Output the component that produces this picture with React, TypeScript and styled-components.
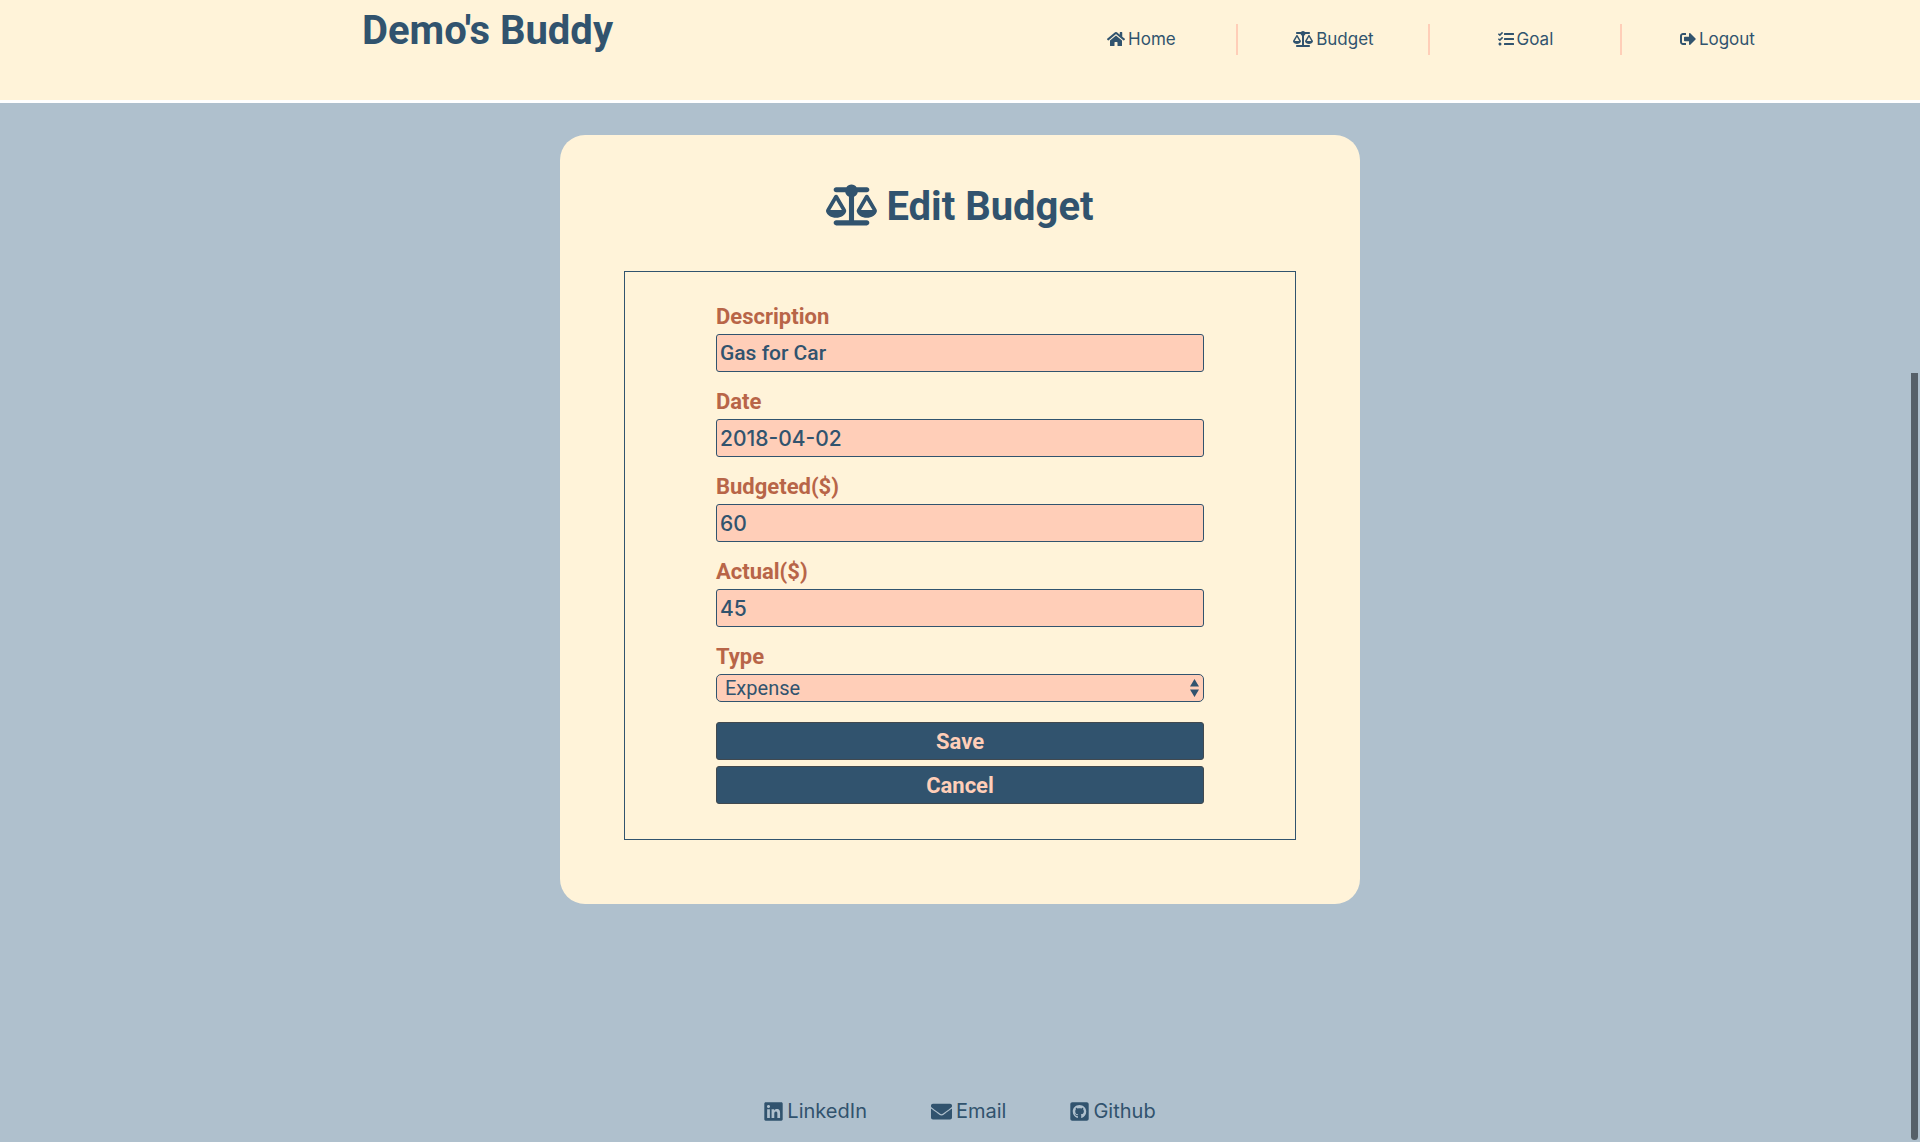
import React from 'react';
import styled, { createGlobalStyle } from 'styled-components';
import { FaHome, FaTasks, FaSignOutAlt, FaLinkedin, FaEnvelope, FaGithubSquare } from 'react-icons/fa';
import { FaScaleBalanced } from 'react-icons/fa6';

const navy = '#31536e';
const cream = '#fff3d9';
const peach = '#ffceb8';
const rust = '#b86548';
const mist = '#afc0cd';

const GlobalStyle = createGlobalStyle`
  *, *::before, *::after { box-sizing: border-box; }
  body {
    margin: 0;
    background: ${mist};
    color: ${navy};
    font-family: Inter, "Liberation Sans", sans-serif;
  }
`;

const Page = styled.div`
  display: flex;
  flex-direction: column;
  min-height: 100vh;
`;

const Header = styled.header`
  display: flex;
  justify-content: space-between;
  align-items: flex-start;
  padding: 0 5.5% 0 18.85%;
  min-height: 103px;
  background: ${cream};
  border-bottom: 3px solid #fff;
`;

const Brand = styled.h1`
  margin: 7px 0 0;
  font: bold 40px/48px Roboto, sans-serif;
`;

const NavList = styled.ul`
  display: grid;
  grid-template-columns: repeat(4, 10vw);
  margin: 24px 0 0;
  padding: 0;
  list-style: none;
`;

const NavItem = styled.li`
  display: flex;
  justify-content: center;
  align-items: flex-start;
  height: 31px;
  border-right: 2px solid ${peach};

  &:last-child {
    border-right-color: transparent;
  }
`;

const IconLink = styled.a<{ $icon: number }>`
  display: inline-flex;
  align-items: center;
  gap: 3px;
  color: ${navy};
  font-size: 17px;
  line-height: 30px;
  text-decoration: none;

  svg {
    flex: none;
    width: ${(p) => p.$icon}px;
    height: 16px;
  }
`;

const FooterLink = styled(IconLink)`
  gap: 4px;
  font-size: 20px;

  svg {
    height: 21px;
  }
`;

const Card = styled.main`
  width: 800px;
  max-width: 100%;
  margin: 32px auto 0;
  padding: 48px 64px 64px;
  background: ${cream};
  border-radius: 25px;
`;

const Title = styled.h2`
  display: flex;
  justify-content: center;
  align-items: flex-start;
  gap: 9px;
  margin: 0 0 40px;
  font: bold 40px/48px Roboto, sans-serif;

  svg {
    width: 51px;
    height: 44px;
  }
`;

const Form = styled.form`
  display: flex;
  flex-direction: column;
  padding: 30px 91px 35px;
  border: 1px solid ${navy};
`;

const Field = styled.div`
  display: flex;
  flex-direction: column;
  margin-bottom: 15px;
`;

const Label = styled.label`
  padding-bottom: 2px;
  color: ${rust};
  font: bold 22px/30px Roboto, sans-serif;
`;

const TextInput = styled.input<{ $numeric: boolean }>`
  width: 100%;
  height: 38px;
  padding: 0 3px;
  background: ${peach};
  border: 1px solid ${navy};
  border-radius: 3px;
  color: ${navy};
  font-family: ${(p) => (p.$numeric ? 'Inter' : 'Roboto')}, sans-serif;
  font-size: 21px;
  font-weight: 500;
`;

const SelectWrap = styled.div`
  display: grid;
  align-items: center;
  margin-bottom: 5px;

  > * {
    grid-area: 1 / 1;
  }

  svg {
    justify-self: end;
    margin-right: 5px;
    pointer-events: none;
  }
`;

const Select = styled.select`
  appearance: none;
  width: 100%;
  height: 28px;
  padding: 0 8px;
  background: ${peach};
  border: 1px solid ${navy};
  border-radius: 5px;
  color: ${navy};
  font: 20px Roboto, sans-serif;
`;

const Button = styled.button`
  height: 38px;
  padding: 0;
  background: ${navy};
  border: 1px solid #41494f;
  border-radius: 3px;
  color: ${peach};
  font: bold 22px Roboto, sans-serif;

  & + & {
    margin-top: 6px;
  }
`;

const Footer = styled.footer`
  display: flex;
  justify-content: center;
  gap: 64px;
  margin-top: auto;
  padding: 32px 0 16px;
`;

const ScrollThumb = styled.div`
  position: fixed;
  top: 373px;
  right: 2px;
  bottom: 2px;
  width: 7px;
  background: #566069;
  border-radius: 0 0 4px 4px;
`;

const navLinks = [
  { label: 'Home', Icon: FaHome, width: 18 },
  { label: 'Budget', Icon: FaScaleBalanced, width: 20 },
  { label: 'Goal', Icon: FaTasks, width: 16 },
  { label: 'Logout', Icon: FaSignOutAlt, width: 16 },
];

const fields = [
  { id: 'description', label: 'Description', value: 'Gas for Car', numeric: false },
  { id: 'date', label: 'Date', value: '2018-04-02', numeric: true },
  { id: 'budgeted', label: 'Budgeted($)', value: '60', numeric: true },
  { id: 'actual', label: 'Actual($)', value: '45', numeric: true },
];

const contacts = [
  { label: 'LinkedIn', Icon: FaLinkedin, width: 19 },
  { label: 'Email', Icon: FaEnvelope, width: 21 },
  { label: 'Github', Icon: FaGithubSquare, width: 19 },
];

export default function App() {
  return (
    <Page>
      <GlobalStyle />
      <Header>
        <Brand>Demo's Buddy</Brand>
        <nav>
          <NavList>
            {navLinks.map(({ label, Icon, width }) => (
              <NavItem key={label}>
                <IconLink href="#" $icon={width}>
                  <Icon />
                  {label}
                </IconLink>
              </NavItem>
            ))}
          </NavList>
        </nav>
      </Header>
      <Card>
        <Title>
          <FaScaleBalanced />
          Edit Budget
        </Title>
        <Form onSubmit={(e) => e.preventDefault()}>
          {fields.map(({ id, label, value, numeric }) => (
            <Field key={id}>
              <Label htmlFor={id}>{label}</Label>
              <TextInput id={id} type="text" defaultValue={value} $numeric={numeric} />
            </Field>
          ))}
          <Field>
            <Label htmlFor="type">Type</Label>
            <SelectWrap>
              <Select id="type" defaultValue="Expense">
                <option>Expense</option>
                <option>Income</option>
              </Select>
              <svg width="9" height="18" viewBox="0 0 9 18" fill={navy} aria-hidden="true">
                <path d="M4.5 0 9 7.5H0zM4.5 18 0 10.5h9z" />
              </svg>
            </SelectWrap>
          </Field>
          <Button type="submit">Save</Button>
          <Button type="button">Cancel</Button>
        </Form>
      </Card>
      <Footer>
        {contacts.map(({ label, Icon, width }) => (
          <FooterLink key={label} href="#" $icon={width}>
            <Icon />
            {label}
          </FooterLink>
        ))}
      </Footer>
      <ScrollThumb />
    </Page>
  );
}
